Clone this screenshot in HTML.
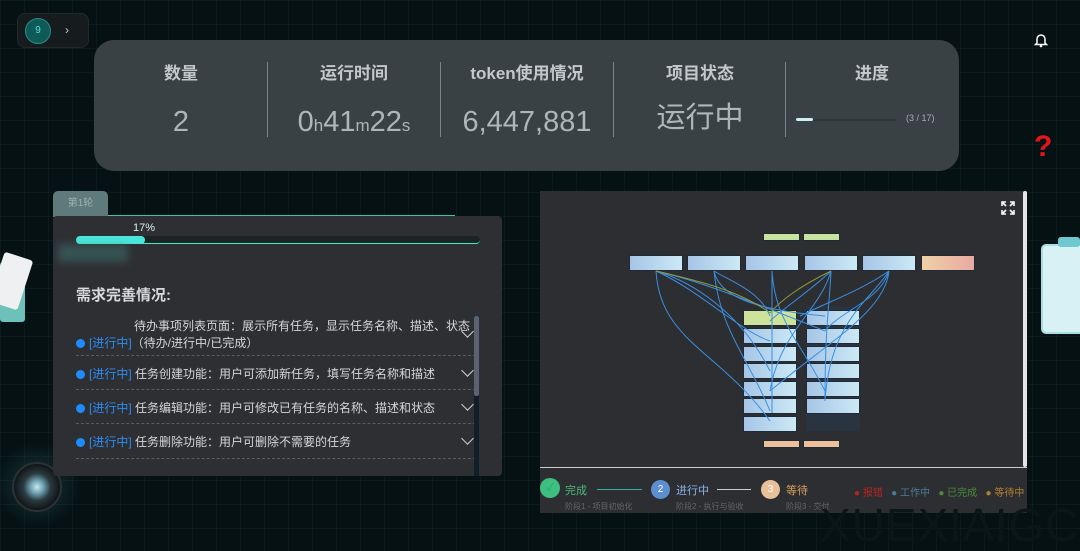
<!DOCTYPE html>
<html><head><meta charset="utf-8"><style>
*{margin:0;padding:0;box-sizing:border-box}
body{width:1080px;height:549px;overflow:hidden;background:#051113;font-family:"Liberation Sans","Noto Sans CJK SC",sans-serif;position:relative;
background-image:linear-gradient(rgba(60,90,90,.12) 1px,transparent 1px),linear-gradient(90deg,rgba(60,90,90,.12) 1px,transparent 1px);background-size:24px 24px}
.a{position:absolute}
.stat{left:94px;top:40px;width:865px;height:131px;background:#394145;border-radius:20px}
.col{position:absolute;top:0;height:131px;text-align:center;color:#b9c0c2}
.col .t{position:absolute;left:0;right:0;top:23px;line-height:22px;font-size:17px;font-weight:bold;color:#c3c8ca}
.col .v{position:absolute;left:0;right:0;top:64px;line-height:36px;font-size:29px;color:#aeb6b9}
.sep{position:absolute;top:22px;width:1px;height:75px;background:#7b8587}
.panel{left:53px;top:216px;width:449px;height:260px;background:#2e2f33;border-radius:4px;overflow:hidden}
.item{position:absolute;left:23px;width:400px;border-bottom:1px dashed #5a5c60;font-size:12px;color:#d5d6d8}
.dot{display:inline-block;width:9px;height:9px;border-radius:50%;background:#1e8cff;margin-right:4px;vertical-align:-1px}
.st{color:#2d8cf0}
.chev{position:absolute;right:4px;width:9px;height:9px;border-right:1.5px solid #cfd0d2;border-bottom:1.5px solid #cfd0d2;transform:rotate(45deg)}
.g{left:540px;top:191px;width:487px;height:322px;background:#2d2e32}
.n{position:absolute;height:16px;border-radius:1px;background:linear-gradient(90deg,#a6c5e6,#cbe9f5);border:1px solid #1f2a36}
</style></head><body>
<div class="a" style="left:17px;top:13px;width:72px;height:35px;background:#161b1e;border-radius:8px;border:1px solid #22292c"></div>
<div class="a" style="left:25px;top:18px;width:26px;height:26px;border-radius:50%;background:#0e5a58;border:1px solid #2a8b86;color:#56e0d0;font-size:10px;text-align:center;line-height:24px">9</div>
<div class="a" style="left:65px;top:23px;color:#ccc;font-size:12px">›</div>

<div class="a stat">
 <div class="col" style="left:0;width:174px"><div class="t">数量</div><div class="v">2</div></div>
 <div class="sep" style="left:173px"></div>
 <div class="col" style="left:174px;width:172px"><div class="t">运行时间</div><div class="v">0<span style="font-size:17px">h</span>41<span style="font-size:17px">m</span>22<span style="font-size:17px">s</span></div></div>
 <div class="sep" style="left:346px"></div>
 <div class="col" style="left:347px;width:172px"><div class="t">token使用情况</div><div class="v">6,447,881</div></div>
 <div class="sep" style="left:519px"></div>
 <div class="col" style="left:520px;width:172px"><div class="t">项目状态</div><div class="v" style="top:60px">运行中</div></div>
 <div class="sep" style="left:691px"></div>
 <div class="col" style="left:692px;width:172px"><div class="t">进度</div></div>
 <div class="a" style="left:702px;top:79px;width:100px;height:2px;background:#30383b"></div>
 <div class="a" style="left:702px;top:78px;width:17px;height:3px;background:#cdeff0;border-radius:2px"></div>
 <div class="a" style="left:812px;top:73px;font-size:9px;color:#aab">(3 / 17)</div>
</div>

<svg class="a" style="left:1034px;top:32px" width="14" height="16" viewBox="0 0 14 16"><path d="M3 11V7a4 4 0 0 1 8 0v4l1.5 1.5h-11z" fill="none" stroke="#fff" stroke-width="1.5"/><circle cx="7" cy="14" r="1.3" fill="#fff"/></svg>
<div class="a" style="left:1034px;top:130px;color:#e0161b;font-size:30px;font-weight:bold">?</div>

<div class="a" style="left:0;top:262px;width:25px;height:60px;background:#6cc1bb;border-radius:3px"></div>
<div class="a" style="left:-4px;top:255px;width:30px;height:52px;background:#eef0f1;transform:rotate(18deg);border-radius:3px"></div>
<div class="a" style="left:1041px;top:244px;width:45px;height:90px;background:#d8f1f4;border-radius:5px;border:2px solid #a8dde3"></div>
<div class="a" style="left:1058px;top:237px;width:22px;height:10px;background:#6ec8d0;border-radius:3px"></div>
<div class="a" style="left:-5px;top:440px;width:85px;height:90px;border-radius:50%;background:radial-gradient(circle,rgba(80,170,160,.25),transparent 70%)"></div>
<div class="a" style="left:12px;top:462px;width:50px;height:50px;border-radius:50%;background:radial-gradient(circle,#c8e8e6 0,#7ab 18%,#2a3a40 42%,#111618 70%);border:2px solid #2a3234"></div>

<div class="a" style="left:53px;top:191px;width:55px;height:26px;background:#5f7a7a;border-radius:5px 5px 0 0;color:#9fb3b1;font-size:10px;text-align:center;line-height:26px">第1轮</div>
<div class="a" style="left:108px;top:215px;width:347px;height:2px;background:#3ec3b5"></div>
<div class="a panel">
 <div class="a" style="left:80px;top:6px;font-size:11px;color:#d8f0ef">17%</div>
 <div class="a" style="left:23px;top:20px;width:404px;height:8px;background:#1d2325;border-radius:4px;border-bottom:1px solid #3ec"></div>
 <div class="a" style="left:23px;top:20px;width:69px;height:8px;background:#4be6db;border-radius:4px"></div>
 <div class="a" style="left:5px;top:28px;width:70px;height:18px;background:rgba(70,150,140,.35);filter:blur(4px)"></div>
 <div class="a" style="left:23px;top:68px;font-size:15px;font-weight:bold;color:#d9dadc">需求完善情况:</div>
 <div class="item" style="top:102px;height:38px"><div style="padding-left:58px;line-height:17px">待办事项列表页面：展示所有任务，显示任务名称、描述、状态</div><div style="line-height:17px"><span class="dot"></span><span class="st">[进行中]</span>（待办/进行中/已完成）</div><div class="chev" style="top:9px"></div></div>
 <div class="item" style="top:140px;height:34px;line-height:36px"><span class="dot"></span><span class="st">[进行中]</span> 任务创建功能：用户可添加新任务，填写任务名称和描述<div class="chev" style="top:10px"></div></div>
 <div class="item" style="top:174px;height:34px;line-height:36px"><span class="dot"></span><span class="st">[进行中]</span> 任务编辑功能：用户可修改已有任务的名称、描述和状态<div class="chev" style="top:10px"></div></div>
 <div class="item" style="top:208px;height:35px;line-height:36px"><span class="dot"></span><span class="st">[进行中]</span> 任务删除功能：用户可删除不需要的任务<div class="chev" style="top:10px"></div></div>
 <div class="a" style="left:421px;top:100px;width:5px;height:160px;background:#10202a"></div>
 <div class="a" style="left:421px;top:100px;width:5px;height:80px;background:#5a6372;border-radius:2px"></div>
</div>

<div class="a g">
 <svg class="a" style="left:461px;top:10px" width="14" height="14" viewBox="0 0 14 14" fill="none" stroke="#fff" stroke-width="1.6"><path d="M1 5V1h4M1 1l4 4M13 5V1H9M13 1 9 5M1 9v4h4M1 13l4-4M13 9v4H9M13 13 9 9"/></svg>
 <div class="a" style="left:483px;top:0;width:4px;height:276px;background:#e5e5e5;border-radius:2px"></div>
 <div class="a" style="left:0;top:276px;width:487px;height:1px;background:#ccc"></div>
 <div class="n" style="left:223px;top:42px;width:37px;height:8px;background:#c6e3a0"></div>
 <div class="n" style="left:263px;top:42px;width:37px;height:8px;background:#c6e3a0"></div>
 <div class="n" style="left:89px;top:64px;width:54px"></div>
 <div class="n" style="left:147px;top:64px;width:54px"></div>
 <div class="n" style="left:205px;top:64px;width:54px"></div>
 <div class="n" style="left:264px;top:64px;width:54px"></div>
 <div class="n" style="left:322px;top:64px;width:54px"></div>
 <div class="n" style="left:381px;top:64px;width:54px;background:linear-gradient(90deg,#efd0a8,#e8aaa0)"></div>
 <div class="a" style="left:266px;top:115px;width:54px;height:125px;background:#2a3340"></div>
 <div class="n" style="left:203px;top:119px;width:54px;background:#cde39a"></div>
 <div class="n" style="left:203px;top:137px;width:54px"></div><div class="n" style="left:203px;top:155px;width:54px"></div><div class="n" style="left:203px;top:172px;width:54px"></div><div class="n" style="left:203px;top:190px;width:54px"></div><div class="n" style="left:203px;top:207px;width:54px"></div><div class="n" style="left:203px;top:225px;width:54px"></div>
 <div class="n" style="left:266px;top:119px;width:54px"></div><div class="n" style="left:266px;top:137px;width:54px"></div><div class="n" style="left:266px;top:155px;width:54px"></div><div class="n" style="left:266px;top:172px;width:54px"></div><div class="n" style="left:266px;top:190px;width:54px"></div><div class="n" style="left:266px;top:207px;width:54px"></div>
 <div class="n" style="left:223px;top:249px;width:37px;height:8px;background:#eec09a"></div>
 <div class="n" style="left:263px;top:249px;width:37px;height:8px;background:#eec09a"></div>
 <svg class="a" style="left:0;top:0" width="480" height="276" fill="none" stroke="#3a8fe0" stroke-width="1">
  <path d="M116 80C120 150 180 160 230 230M116 80C150 90 200 120 230 180M116 80C160 90 210 110 285 140M116 80C160 100 200 140 230 150"/>
  <path d="M174 80C180 140 210 170 230 220M174 80C180 110 230 120 285 125M174 80C190 90 220 100 230 125"/>
  <path d="M232 80V222M232 80C235 130 260 150 285 200"/>
  <path d="M291 80C280 120 240 140 230 200M291 80C290 110 285 130 285 210M291 80C270 100 240 120 230 130"/>
  <path d="M349 80C330 110 290 130 285 210M349 80C340 110 300 120 285 140M349 80C345 120 290 150 230 200M349 80C320 100 290 110 260 125"/>
  <path d="M116 80C160 90 200 100 230 122M291 80C260 95 240 110 230 122" stroke="#8a9a40"/>
 </svg>
 <div class="a" style="left:0;top:287px;width:20px;height:20px;border-radius:50%;background:#3fbf7f;color:#2a7;text-align:center;line-height:20px;font-size:11px">✓</div>
 <div class="a" style="left:25px;top:291px;font-size:11px;color:#4cba7a">完成</div>
 <div class="a" style="left:57px;top:298px;width:45px;height:1px;background:#3aa"></div>
 <div class="a" style="left:25px;top:310px;font-size:8px;color:#666">阶段1 - 项目初始化</div>
 <div class="a" style="left:111px;top:289px;width:19px;height:19px;border-radius:50%;background:#5d8fd0;color:#fff;text-align:center;line-height:19px;font-size:10px">2</div>
 <div class="a" style="left:136px;top:291px;font-size:11px;color:#8ab4e8">进行中</div>
 <div class="a" style="left:177px;top:298px;width:34px;height:1px;background:#ccc"></div>
 <div class="a" style="left:136px;top:310px;font-size:8px;color:#666">阶段2 - 执行与验收</div>
 <div class="a" style="left:221px;top:289px;width:19px;height:19px;border-radius:50%;background:#e8c09a;color:#fff;text-align:center;line-height:19px;font-size:10px">3</div>
 <div class="a" style="left:246px;top:291px;font-size:11px;color:#d8a060">等待</div>
 <div class="a" style="left:246px;top:310px;font-size:8px;color:#666">阶段3 - 交付</div>
 <div class="a" style="left:314px;top:293px;font-size:10px;white-space:nowrap"><span style="color:#b22">● 报错</span>&nbsp;&nbsp; <span style="color:#4a7a9a">● 工作中</span>&nbsp;&nbsp; <span style="color:#4a8a3a">● 已完成</span>&nbsp;&nbsp; <span style="color:#b08030">● 等待中</span></div>
</div>
<div class="a" style="left:820px;top:500px;font-size:46px;line-height:50px;color:#0a1618;letter-spacing:1px">XUEXIAIGC</div>
</body></html>
